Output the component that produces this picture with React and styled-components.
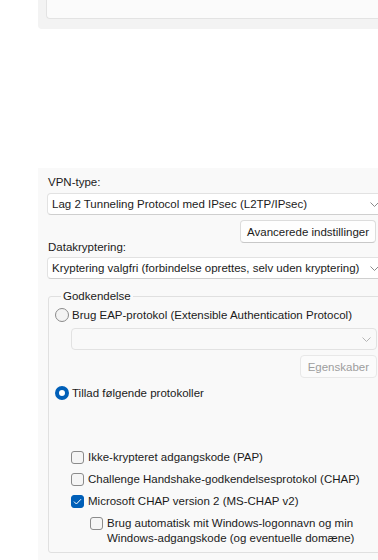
import styled, { createGlobalStyle } from 'styled-components'

const Global = createGlobalStyle`
  body {
    margin: 0;
    background: #ffffff;
    font-family: "Liberation Sans", Arial, sans-serif;
    font-size: 11.5px;
    color: #1b1b1b;
  }
`

const Page = styled.div`
  width: 378px;
  height: 560px;
  overflow: hidden;
  display: flex;
  flex-direction: column;
`

const TopPanel = styled.div`
  margin-left: 38px;
  height: 29px;
  width: 360px;
  flex-shrink: 0;
  background: #f3f3f3;
  border-bottom-left-radius: 4px;
`

const TopCard = styled.div`
  margin-left: 8px;
  height: 18px;
  background: #fbfbfb;
  border-left: 1px solid #e3e3e3;
  border-bottom: 1px solid #e3e3e3;
  border-bottom-left-radius: 4px;
`

const Dialog = styled.div`
  margin-top: 139px;
  margin-left: 38px;
  width: 360px;
  flex: 1;
  background: #f9f9f9;
  padding: 6px 0 0 9px;
`

const Column = styled.div`
  width: 338px;
  display: flex;
  flex-direction: column;
`

const Label = styled.div`
  line-height: 16px;
  padding-left: 1px;
`

const Select = styled.div`
  position: relative;
  height: 20px;
  margin-top: ${p => p.$top || 0}px;
  align-self: stretch;
  background: ${p => (p.$disabled ? '#f9f9f9' : '#ffffff')};
  border: 1px solid #e2e2e2;
  border-bottom-color: ${p => (p.$disabled ? '#e2e2e2' : '#cfcfcf')};
  border-radius: 4px;
  display: flex;
  align-items: center;
  padding-left: 4px;
  line-height: 16px;
  white-space: nowrap;
`

const Chevron = styled.svg`
  position: absolute;
  right: 5px;
  top: 8px;
`

const ButtonRow = styled.div`
  display: flex;
  justify-content: space-between;
  height: 35px;
  margin-top: 5px;
`

const Button = styled.div`
  align-self: flex-start;
  height: 21px;
  padding: 0 ${p => (p.$disabled ? 7 : 6)}px;
  margin-top: ${p => p.$top || 0}px;
  margin-right: ${p => p.$right || 0}px;
  background: ${p => (p.$disabled ? '#fbfbfb' : '#fefefe')};
  color: ${p => (p.$disabled ? '#9d9d9d' : '#1b1b1b')};
  border: 1px solid ${p => (p.$disabled ? '#e8e8e8' : '#dcdcdc')};
  border-bottom-color: ${p => (p.$disabled ? '#e8e8e8' : '#c8c8c8')};
  border-radius: 4px;
  display: flex;
  align-items: center;
  white-space: nowrap;
`

const BottomLabel = styled(Label)`
  align-self: flex-end;
`

const Group = styled.fieldset`
  margin: 9px -30px 0 1px;
  padding: 0 0 6px 6px;
  border: 1px solid #e0e0e0;
  border-radius: 3px;
  min-width: 0;
`

const Legend = styled.legend`
  line-height: 16px;
  padding: 0 2px;
  margin-left: 6px;
`

const RadioRow = styled.div`
  display: flex;
  align-items: center;
  gap: 3px;
  line-height: 16px;
  margin-top: ${p => p.$top}px;
  white-space: nowrap;
`

const Radio = styled.span`
  width: 14px;
  height: 14px;
  box-sizing: border-box;
  border-radius: 50%;
  flex-shrink: 0;
  border: ${p => (p.$checked ? '4px solid #005fb8' : '1px solid #8b8b8b')};
  background: ${p => (p.$checked ? '#ffffff' : '#f3f3f3')};
`

const EapBlock = styled.div`
  width: 306px;
  margin-left: 16px;
  display: flex;
  flex-direction: column;
`

const EapButton = styled(Button)`
  align-self: flex-end;
`

const Protocols = styled.div`
  margin-top: 49px;
  display: flex;
  flex-direction: column;
  gap: 7px;
`

const CheckRow = styled.div`
  display: flex;
  align-items: flex-start;
  gap: 4px;
  padding-left: ${p => p.$indent}px;
  line-height: 15px;
`

const Box = styled.span`
  width: 13px;
  height: 13px;
  margin-top: 1px;
  box-sizing: border-box;
  flex-shrink: 0;
  border-radius: 3px;
  border: 1px solid ${p => (p.$checked ? '#005fb8' : '#8b8b8b')};
  background: ${p => (p.$checked ? '#005fb8' : '#f5f5f5')};
  display: flex;
  align-items: center;
  justify-content: center;
`

const ChevronIcon = ({ color = '#8a8a8a' }) => (
  <Chevron width="9" height="5" viewBox="0 0 9 5">
    <polyline points="0.5,0.5 4.5,4.5 8.5,0.5" fill="none" stroke={color} strokeWidth="1" />
  </Chevron>
)

const Check = ({ label, checked, indent = 0 }) => (
  <CheckRow $indent={indent}>
    <Box $checked={checked}>
      {checked && (
        <svg width="9" height="7" viewBox="0 0 9 7">
          <polyline points="1,3.6 3.4,6 8,1.2" fill="none" stroke="#ffffff" strokeWidth="1" />
        </svg>
      )}
    </Box>
    <span>{label}</span>
  </CheckRow>
)

export default function App() {
  return (
    <Page>
      <Global />
      <TopPanel>
        <TopCard />
      </TopPanel>
      <Dialog>
        <Column>
          <Label>VPN-type:</Label>
          <Select $top={3}>
            Lag 2 Tunneling Protocol med IPsec (L2TP/IPsec)
            <ChevronIcon />
          </Select>
          <ButtonRow>
            <BottomLabel>Datakryptering:</BottomLabel>
            <Button $right={9}>Avancerede indstillinger</Button>
          </ButtonRow>
          <Select $top={2}>
            Kryptering valgfri (forbindelse oprettes, selv uden kryptering)
            <ChevronIcon />
          </Select>
          <Group>
            <Legend>Godkendelse</Legend>
            <RadioRow $top={3}>
              <Radio />
              Brug EAP-protokol (Extensible Authentication Protocol)
            </RadioRow>
            <EapBlock>
              <Select $top={5} $disabled>
                <ChevronIcon color="#b5b5b5" />
              </Select>
              <EapButton $top={5} $disabled>Egenskaber</EapButton>
            </EapBlock>
            <RadioRow $top={7}>
              <Radio $checked />
              Tillad følgende protokoller
            </RadioRow>
            <Protocols>
              <Check label="Ikke-krypteret adgangskode (PAP)" indent={16} />
              <Check label="Challenge Handshake-godkendelsesprotokol (CHAP)" indent={16} />
              <Check label="Microsoft CHAP version 2 (MS-CHAP v2)" indent={16} checked />
              <Check
                label={<>Brug automatisk mit Windows-logonnavn og min<br />Windows-adgangskode (og eventuelle domæne)</>}
                indent={35}
              />
            </Protocols>
          </Group>
        </Column>
      </Dialog>
    </Page>
  )
}
